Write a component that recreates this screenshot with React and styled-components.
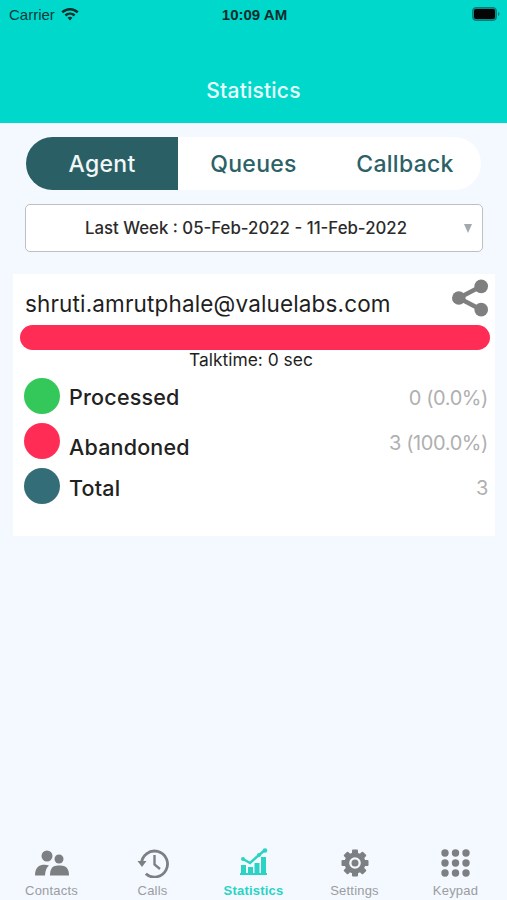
import React from 'react';
import styled, { createGlobalStyle } from 'styled-components';

const GlobalStyle = createGlobalStyle`
    * { box-sizing: border-box; }
    html, body { margin: 0; padding: 0; background: #f4f8ff; }
    body { font-family: Inter, "Noto Sans", sans-serif; }
`

const Page = styled.div`
    width: 507px;
    height: 900px;
    display: flex;
    flex-direction: column;
    overflow: hidden;
    background: #f4f8ff;
`

const Header = styled.header`
    height: 123px;
    flex-shrink: 0;
    background: #00d8cc;
    display: flex;
    flex-direction: column;
`

const StatusBar = styled.div`
    height: 28px;
    padding: 0 7px 0 9px;
    display: grid;
    grid-template-columns: 1fr auto 1fr;
    align-items: center;
    color: #073b3a;
`

const Carrier = styled.div`
    display: flex;
    align-items: center;
    gap: 6px;
    font-family: "Liberation Sans", sans-serif;
    font-size: 15px;
`

const Clock = styled.div`
    font-family: "Liberation Sans", sans-serif;
    font-size: 15px;
    font-weight: bold;
    color: #0a2d2c;
`

const BatteryWrap = styled.div`
    justify-self: end;
    display: flex;
`

const Title = styled.h1`
    margin: 51px 0 0;
    text-align: center;
    color: #e9fffd;
    font-size: 21px;
    line-height: 24px;
    font-weight: 500;
    letter-spacing: 0.2px;
`

const Content = styled.main`
    flex: 1;
    padding-top: 14px;
    display: flex;
    flex-direction: column;
`

const Segments = styled.div`
    margin-left: 26px;
    width: 455px;
    height: 53px;
    border-radius: 27px;
    background: #fff;
    display: flex;
    overflow: hidden;
`

const Segment = styled.div`
    width: ${p => p.$width}px;
    display: flex;
    align-items: center;
    justify-content: center;
    font-size: 23px;
    font-weight: 500;
    letter-spacing: 0.3px;
    background: ${p => (p.$active ? '#2b5f66' : 'transparent')};
    color: ${p => (p.$active ? '#f1f7f7' : '#2b6167')};
`

const Dropdown = styled.div`
    position: relative;
    margin: 14px 0 0 25px;
    width: 458px;
    height: 48px;
    background: #fff;
    border: 1.5px solid #bdbfc2;
    border-radius: 5px;
    display: flex;
    align-items: center;
    justify-content: center;
    padding-right: 16px;
    color: #2b2b2b;
    font-size: 16.8px;
    font-weight: 500;
`

const Caret = styled.span`
    position: absolute;
    right: 10px;
    top: 19px;
    width: 0;
    height: 0;
    border-left: 4.5px solid transparent;
    border-right: 4.5px solid transparent;
    border-top: 9px solid #a5a8ab;
`

const Card = styled.section`
    margin: 22px 0 0 13px;
    width: 482px;
    height: 262px;
    background: #fff;
    padding: 0 5px 0 7px;
    display: flex;
    flex-direction: column;
`

const CardTop = styled.div`
    height: 51px;
    padding: 3px 5px 0;
    display: flex;
    align-items: center;
    justify-content: space-between;
`

const Email = styled.div`
    margin-top: 4px;
    font-size: 22.5px;
    color: #1f1f1f;
    letter-spacing: 0.15px;
    white-space: nowrap;
`

const ShareIcon = styled.svg`
    width: 37px;
    height: 38px;
    flex-shrink: 0;
    margin-right: -4px;
    margin-top: -6px;
`

const Bar = styled.div`
    height: 25px;
    border-radius: 13px;
    background: #ff2d55;
`

const Talktime = styled.div`
    height: 20px;
    line-height: 20px;
    text-align: center;
    color: #1f1f1f;
    font-size: 17.4px;
    padding-right: 8px;
`

const Legend = styled.div`
    margin-top: 8px;
    padding: 0 2px 0 4px;
    display: flex;
    flex-direction: column;
    gap: 9px;
`

const Row = styled.div`
    height: 36px;
    display: flex;
    align-items: center;
`

const Dot = styled.span`
    width: 36px;
    height: 36px;
    border-radius: 50%;
    flex-shrink: 0;
    background: ${p => p.$color};
`

const Label = styled.span`
    margin: ${p => p.$drop}px 0 0 9px;
    flex: 1;
    font-size: 21.5px;
    font-weight: 500;
    color: #222;
    letter-spacing: 0.2px;
`

const Value = styled.span`
    margin-top: 3px;
    font-size: 20px;
    letter-spacing: -0.4px;
    color: #b0b0b0;
`

const TabBar = styled.nav`
    height: 62px;
    flex-shrink: 0;
    padding: 0 1px 1px;
    display: grid;
    grid-template-columns: repeat(5, 101px);
`

const Tab = styled.div`
    display: flex;
    flex-direction: column;
    align-items: center;
    justify-content: flex-end;
    color: ${p => (p.$active ? '#2bd3c5' : '#7d8083')};
`

const TabIcon = styled.div`
    height: 32px;
    display: flex;
    align-items: center;
    justify-content: center;
`

const TabLabel = styled.span`
    margin-top: 4px;
    height: 16px;
    font-family: "Liberation Sans", sans-serif;
    font-size: 13px;
    letter-spacing: 0.2px;
    line-height: 16px;
    color: ${p => (p.$active ? '#2bd3c5' : '#9a9da0')};
    font-weight: ${p => (p.$active ? 'bold' : 'normal')};
`

function WifiIcon() {
    return (
        <svg width="18" height="13" viewBox="0 0 18 13" fill="#0a2d2c">
            <path d="M9 0C5.6 0 2.6 1.3.4 3.5l1.7 1.8C3.9 3.5 6.3 2.4 9 2.4s5.1 1.1 6.9 2.9l1.7-1.8C15.4 1.3 12.4 0 9 0z" />
            <path d="M9 4.4c-2.1 0-4 .8-5.4 2.2l1.7 1.8C6.3 7.4 7.6 6.8 9 6.8s2.7.6 3.7 1.6l1.7-1.8C13 5.2 11.1 4.4 9 4.4z" />
            <path d="M9 8.8c-1 0-1.8.4-2.4 1L9 12.4l2.4-2.6c-.6-.6-1.4-1-2.4-1z" />
        </svg>
    )
}

function BatteryIcon() {
    return (
        <svg width="28" height="14" viewBox="0 0 28 14">
            <rect x="0.5" y="0.5" width="24" height="13" rx="3.5" fill="#0a8d88" stroke="#0a7d78" />
            <rect x="2" y="2" width="21" height="10" rx="2" fill="#050505" />
            <path d="M26 5v4c.8-.3 1.4-1.1 1.4-2S26.8 5.300 26 5z" fill="#0a7d78" />
        </svg>
    )
}

function ContactsIcon() {
    return (
        <svg width="34" height="30" viewBox="0 0 34 30" fill="currentColor">
            <circle cx="12" cy="8" r="5.5" />
            <circle cx="24" cy="11" r="4.5" />
            <path d="M0 27.500c0-5 1.500-8 4-9.500 2.500-1.300 7-1.500 10-.5-2.500 2-3.800 5.500-4 10z" />
            <path d="M15 27.500c0-5 1.300-7.500 3.500-9 3-1.400 8.500-1.400 11.500 0 2.500 1.500 4 4 4 9z" />
        </svg>
    )
}

function CallsIcon() {
    return (
        <svg width="32" height="30" viewBox="0 0 32 30" fill="none" stroke="currentColor" strokeWidth="2.8">
            <path d="M4.500 16A13 13 0 1 1 8.800 25.700" />
            <path d="M0.500 13H9.500L5 19z" fill="currentColor" stroke="none" />
            <path d="M17.500 7v9.500l5.500 4.500" strokeWidth="2.4" />
        </svg>
    )
}

function StatisticsIcon() {
    return (
        <svg width="28" height="30" viewBox="0 0 28 30" fill="currentColor">
            <rect x="1" y="17" width="5" height="8" />
            <rect x="8" y="19" width="5" height="6" />
            <rect x="14.500" y="15" width="5" height="10" />
            <rect x="21" y="9" width="5" height="16" />
            <rect x="0" y="25" width="27" height="2" />
            <path d="M3 11l7 4 9-8 6-5" fill="none" stroke="currentColor" strokeWidth="2.4" />
            <circle cx="3" cy="11" r="2" />
            <circle cx="19" cy="7" r="2" />
            <circle cx="25" cy="2.500" r="2.300" />
        </svg>
    )
}

function SettingsIcon() {
    const teeth = [0, 45, 90, 135, 180, 225, 270, 315]
    return (
        <svg width="28" height="28" viewBox="0 0 28 28" fill="currentColor">
            {teeth.map(a => (
                <rect key={a} x="11" y="0.500" width="6" height="6" rx="1" transform={`rotate(${a} 14 14)`} />
            ))}
            <circle cx="14" cy="14" r="10.500" />
            <circle cx="14" cy="14" r="5.800" fill="#f4f8ff" />
            <circle cx="14" cy="14" r="3.500" />
        </svg>
    )
}

function KeypadIcon() {
    const dots = []
    for (let y = 0; y < 3; y++) {
        for (let x = 0; x < 3; x++) {
            dots.push(<circle key={`${x}-${y}`} cx={4 + x * 10.5} cy={4 + y * 10} r="3.7" />)
        }
    }
    return (
        <svg width="29" height="28" viewBox="0 0 29 28" fill="currentColor">{dots}</svg>
    )
}

const tabs = [
    { label: 'Contacts', icon: <ContactsIcon /> },
    { label: 'Calls', icon: <CallsIcon /> },
    { label: 'Statistics', icon: <StatisticsIcon />, active: true },
    { label: 'Settings', icon: <SettingsIcon /> },
    { label: 'Keypad', icon: <KeypadIcon /> },
]

function App() {
    return (
        <Page>
            <GlobalStyle />
            <Header>
                <StatusBar>
                    <Carrier>Carrier <WifiIcon /></Carrier>
                    <Clock>10:09 AM</Clock>
                    <BatteryWrap><BatteryIcon /></BatteryWrap>
                </StatusBar>
                <Title>Statistics</Title>
            </Header>

            <Content>
                <Segments>
                    <Segment $active $width={152}>Agent</Segment>
                    <Segment $width={151}>Queues</Segment>
                    <Segment $width={152}>Callback</Segment>
                </Segments>

                <Dropdown>
                    Last Week : 05-Feb-2022 - 11-Feb-2022
                    <Caret />
                </Dropdown>

                <Card>
                    <CardTop>
                        <Email>shruti.amrutphale@valuelabs.com</Email>
                        <ShareIcon viewBox="0 0 38 38" fill="#7f7f7f">
                            <circle cx="30" cy="7" r="7" />
                            <circle cx="7" cy="19" r="7" />
                            <circle cx="30" cy="31" r="7" />
                            <path d="M7 19L30 7M7 19l23 12" stroke="#7f7f7f" strokeWidth="4.5" />
                        </ShareIcon>
                    </CardTop>
                    <Bar />
                    <Talktime>Talktime: 0 sec</Talktime>
                    <Legend>
                        <Row>
                            <Dot $color="#34c759" />
                            <Label $drop={2}>Processed</Label>
                            <Value>0 (0.0%)</Value>
                        </Row>
                        <Row>
                            <Dot $color="#ff2d55" />
                            <Label $drop={12}>Abandoned</Label>
                            <Value>3 (100.0%)</Value>
                        </Row>
                        <Row>
                            <Dot $color="#336d78" />
                            <Label $drop={4}>Total</Label>
                            <Value>3</Value>
                        </Row>
                    </Legend>
                </Card>
            </Content>

            <TabBar>
                {tabs.map(t => (
                    <Tab key={t.label} $active={t.active}>
                        <TabIcon>{t.icon}</TabIcon>
                        <TabLabel $active={t.active}>{t.label}</TabLabel>
                    </Tab>
                ))}
            </TabBar>
        </Page>
    )
}

export default App;
